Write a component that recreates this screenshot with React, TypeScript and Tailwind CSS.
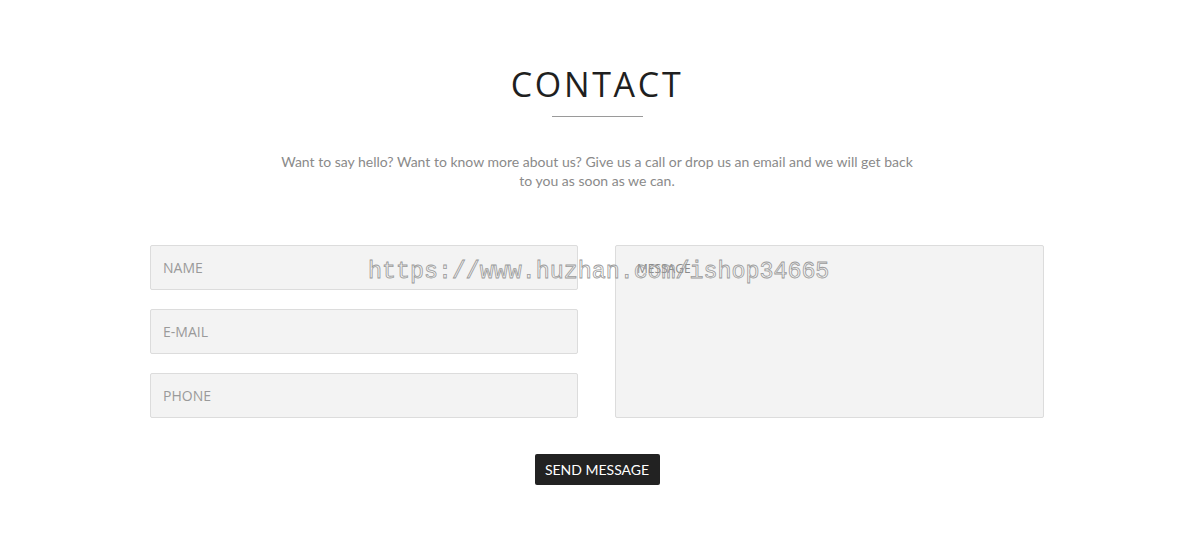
import React from "react";

export default function App() {
  const inputCls =
    "h-[45px] w-full rounded-[2px] border border-[#dcdcdc] bg-[#f3f3f3] px-[12px] text-[14px] text-[#999] placeholder:text-[#9a9a9a] outline-none";
  return (
    <div className="relative min-h-[538px] w-[1194px] bg-white font-['Open_Sans',sans-serif]">
      <div className="flex flex-col items-center pt-[60px]">
        <h1 className="text-[34px] leading-[48px] tracking-[2.7px] text-[#1f1f1f]">CONTACT</h1>
        <div className="mt-[8px] h-px w-[91px] bg-[#9a9a9a]" />
        <p className="mt-[35px] w-[640px] text-center text-[14px] leading-[19px] text-[#8a8a8a] font-['Lato',sans-serif]">
          Want to say hello? Want to know more about us? Give us a call or drop us an email and we will get back to you as soon as we can.
        </p>
        <form className="mt-[55px] flex w-[894px] gap-[37px]">
          <div className="flex w-[428px] flex-col gap-[19px]">
            <input className={inputCls} placeholder="NAME" />
            <input className={inputCls} placeholder="E-MAIL" />
            <input className={inputCls} placeholder="PHONE" />
          </div>
          <textarea
            className="h-[173px] w-[429px] resize-none rounded-[2px] border border-[#dcdcdc] bg-[#f3f3f3] px-[21px] pt-[14px] text-[12px] text-[#999] placeholder:text-[#8a8a8a] outline-none"
            placeholder="MESSAGE"
          />
        </form>
        <button className="mt-[36px] h-[31px] w-[125px] rounded-[2px] bg-[#222] text-[14px] text-white font-['Lato',sans-serif]">
          SEND MESSAGE
        </button>
      </div>
      <div className="pointer-events-none absolute left-[368px] top-[255px] font-['Liberation_Mono',monospace] text-[23.3px] text-transparent [-webkit-text-stroke:0.8px_#9a9a9a]">
        https://www.huzhan.com/ishop34665
      </div>
    </div>
  );
}
